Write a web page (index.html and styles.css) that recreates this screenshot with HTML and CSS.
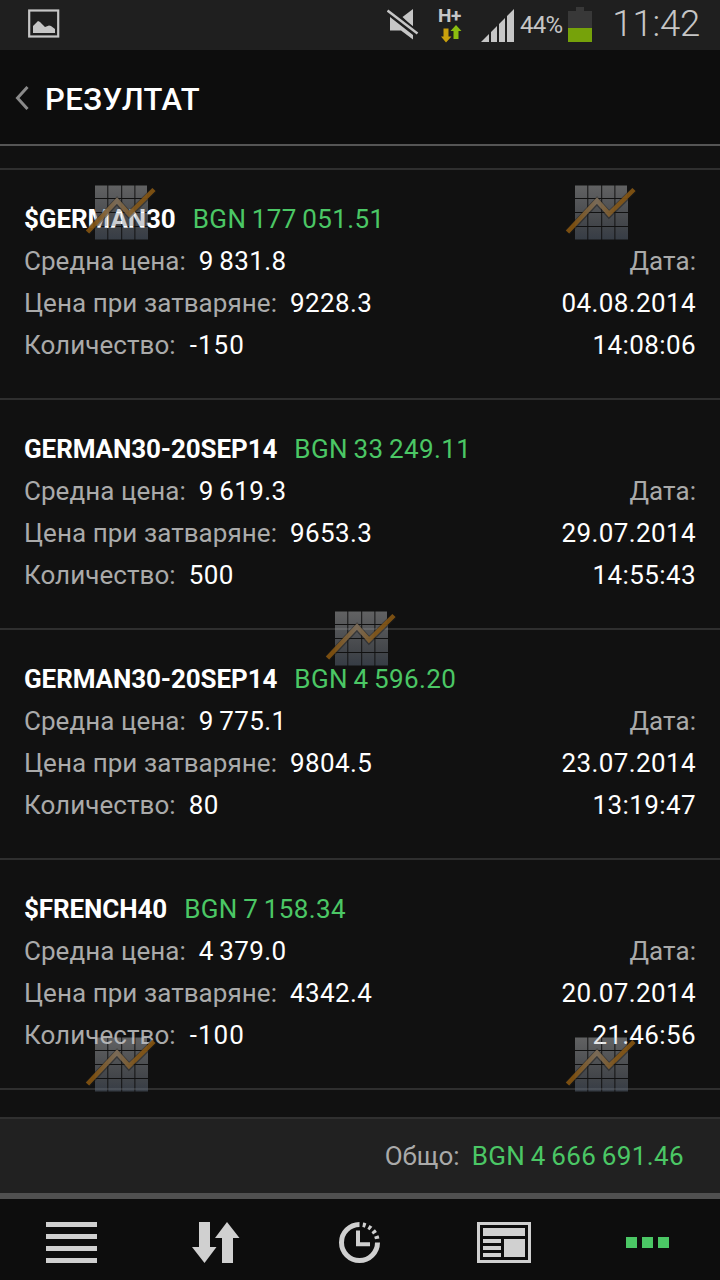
FILE: index.html
```
<!DOCTYPE html>
<html lang="bg">
<head>
    <meta charset="utf-8">
    <title>Резултат</title>
    <link rel="stylesheet" href="styles.css">
</head>
<body>
    <div class="statusbar">
        <svg class="icon-picture" width="32" height="29" viewBox="0 0 32 29">
            <rect x="1.2" y="1.5" width="29" height="26" fill="none" stroke="#c6c6c6" stroke-width="2.2"/>
            <path d="M5 24V17L10 12L12 13L17 18L21 16.500L23 17L27 20V24Z" fill="#c6c6c6"/>
        </svg>
        <svg class="icon-mute" width="32" height="32" viewBox="0 0 32 32">
            <path d="M26 1V19L15.500 9ZM3 9L26 27V31.500L14 22.500H3Z" fill="#c6c6c6"/>
            <path d="M0.500 2.500L30.500 25.500" stroke="#1f1f1f" stroke-width="6"/>
            <path d="M0.500 2.500L30.500 25.500" stroke="#c6c6c6" stroke-width="2.400"/>
        </svg>
        <div class="network">
            <span>H+</span>
            <svg width="22" height="18" viewBox="0 0 22 18">
                <path d="M2.500 3.500H7.500V11.500H10.500L5 17.500L0 11.500H2.500Z" fill="#c9a00c"/>
                <path d="M15 0L20.500 6H17.500V14H12.500V6H9.500Z" fill="#8bbd10"/>
            </svg>
        </div>
        <svg class="icon-signal" width="33" height="33" viewBox="0 0 33 33" fill="#c6c6c6">
            <path d="M0 33L8 25V33ZM10 23L16 17V33H10ZM18 15L24 9V33H18ZM26 7L33 0V33H26Z"/>
        </svg>
        <span class="percent">44%</span>
        <svg class="icon-battery" width="24" height="35" viewBox="0 0 24 35">
            <path d="M8 0H16V4H24V21H0V4H8Z" fill="#383838"/>
            <rect y="21" width="24" height="14" fill="#76a20a"/>
        </svg>
        <span class="time">11:42</span>
    </div>

    <header class="header">
        <svg width="14" height="24" viewBox="0 0 14 24"><path d="M12.500 1L2.500 12L12.500 23" fill="none" stroke="#8a8a8a" stroke-width="3"/></svg>
        <h1>РЕЗУЛТАТ</h1>
    </header>

    <main class="results">
        <div class="result">
            <div class="title"><b>$GERMAN30</b><span class="profit">BGN 177 051.51</span></div>
            <div class="line"><label>Средна цена:</label><span>9 831.8</span><label class="right">Дата:</label></div>
            <div class="line"><label>Цена при затваряне:</label><span>9228.3</span><span class="right">04.08.2014</span></div>
            <div class="line"><label>Количество:</label><span class="short">-150</span><span class="right">14:08:06</span></div>
        </div>
        <div class="result">
            <div class="title"><b>GERMAN30-20SEP14</b><span class="profit">BGN 33 249.11</span></div>
            <div class="line"><label>Средна цена:</label><span>9 619.3</span><label class="right">Дата:</label></div>
            <div class="line"><label>Цена при затваряне:</label><span>9653.3</span><span class="right">29.07.2014</span></div>
            <div class="line"><label>Количество:</label><span>500</span><span class="right">14:55:43</span></div>
        </div>
        <div class="result">
            <div class="title"><b>GERMAN30-20SEP14</b><span class="profit">BGN 4 596.20</span></div>
            <div class="line"><label>Средна цена:</label><span>9 775.1</span><label class="right">Дата:</label></div>
            <div class="line"><label>Цена при затваряне:</label><span>9804.5</span><span class="right">23.07.2014</span></div>
            <div class="line"><label>Количество:</label><span>80</span><span class="right">13:19:47</span></div>
        </div>
        <div class="result">
            <div class="title"><b>$FRENCH40</b><span class="profit">BGN 7 158.34</span></div>
            <div class="line"><label>Средна цена:</label><span>4 379.0</span><label class="right">Дата:</label></div>
            <div class="line"><label>Цена при затваряне:</label><span>4342.4</span><span class="right">20.07.2014</span></div>
            <div class="line"><label>Количество:</label><span class="short">-100</span><span class="right">21:46:56</span></div>
        </div>
    </main>

    <div class="total"><label>Общо:</label><span class="profit">BGN 4 666 691.46</span></div>

    <nav class="navbar">
        <a><svg width="52" height="41" viewBox="0 0 52 41"><path d="M0 0H51V5H0ZM0 12H51V17H0ZM0 24H51V29H0ZM0 36H51V41H0Z"/></svg></a>
        <a><svg width="48" height="41" viewBox="0 0 48 41"><path d="M7 0H18V25H24.500L12.500 41L0 25H7ZM35 0L47.500 16H41V41H30V16H23Z"/></svg></a>
        <a><svg width="42" height="41" viewBox="0 0 42 41">
            <g fill="none" stroke="#d0d0d0">
                <path d="M20.500 2.500A18 18 0 1 0 38.500 20.500" stroke-width="5"/>
                <path d="M23.750 2.800A18 18 0 0 1 38.200 17.100" stroke-width="4.500" stroke-dasharray="3 3.100"/>
                <path d="M19 8.500V22.300H31" stroke-width="4"/>
            </g>
        </svg></a>
        <a><svg width="54" height="41" viewBox="0 0 54 41"><path fill-rule="evenodd" d="M0 0H54V41H0ZM3 3V38H51V3ZM6 6H48V14H6ZM6 17H24V21H6ZM6 24H24V28H6ZM6 31H24V35H6ZM27 17H48V35H27Z"/></svg></a>
        <a class="active"><svg width="44" height="11" viewBox="0 0 44 11"><path d="M0 0H11V11H0ZM16 0H27V11H16ZM32 0H43V11H32Z"/></svg></a>
    </nav>

    <!-- watermarks over the list -->
    <svg class="watermark" width="720" height="1280" viewBox="0 0 720 1280">
        <defs>
            <linearGradient id="tiles" x1="0" y1="0" x2="0" y2="54" gradientUnits="userSpaceOnUse">
                <stop offset="0" stop-color="#c8c9cb"/>
                <stop offset="0.7" stop-color="#858b94"/>
                <stop offset="1" stop-color="#667488"/>
            </linearGradient>
            <linearGradient id="trend" x1="0" y1="0" x2="70" y2="0" gradientUnits="userSpaceOnUse">
                <stop offset="0.1" stop-color="#85540f"/>
                <stop offset="0.440" stop-color="#80705c"/>
                <stop offset="0.7" stop-color="#85591b"/>
                <stop offset="1" stop-color="#85540f"/>
            </linearGradient>
            <g id="chart">
                <path d="M9 0H21.300V12.500H9ZM22.300 0H35.200V12.500H22.300ZM36.200 0H48.400V12.500H36.200ZM49.400 0H61V12.500H49.400ZM9 13.500H21.300V26.500H9ZM22.300 13.500H35.200V26.500H22.300ZM36.200 13.500H48.400V26.500H36.200ZM49.400 13.500H62V26.500H49.400ZM9 27.500H21.300V40.500H9ZM22.300 27.500H35.200V40.500H22.300ZM36.200 27.500H48.400V40.500H36.200ZM49.400 27.500H62V40.500H49.400ZM9 41.500H21.300V54H9ZM22.300 41.500H35.200V54H22.300ZM36.200 41.500H48.400V54H36.200ZM49.400 41.500H62V54H49.400Z" fill="url(#tiles)" opacity="0.440"/>
                <path d="M1.500 47L31 15.500L43 29L68 4.500" fill="none" stroke="#1b1b1b" stroke-width="6.500" opacity="0.5"/>
                <path d="M1.500 46.500L31 15L43 28.500L68 4" fill="none" stroke="url(#trend)" stroke-width="4.500" opacity="0.9"/>
            </g>
        </defs>
        <use href="#chart" x="86" y="185.500"/>
        <use href="#chart" x="566" y="185.500"/>
        <use href="#chart" x="326" y="611.500"/>
        <use href="#chart" x="86" y="1037.500"/>
        <use href="#chart" x="566" y="1037.500"/>
    </svg>
</body>
</html>
```
FILE: styles.css
```
* {
    box-sizing: border-box;
}

body {
    width: 720px;
    height: 1280px;
    margin: 0;
    overflow: hidden;
    background-color: #111;
    color: #fff;
    font-family: Roboto, sans-serif;
    font-size: 26px;
}

.statusbar {
    display: flex;
    align-items: flex-start;
    height: 50px;
    padding: 0 20px 0 28px;
    background-color: #1f1f1f;
    color: #c6c6c6;
}

.icon-picture {
    margin-top: 9px;
}

.icon-mute {
    margin: 8px 0 0 327px;
}

.network {
    width: 26px;
    margin: 8px 0 0 19px;
    font-size: 19px;
    font-weight: 700;
    line-height: 16px;
    letter-spacing: -0.3px;
}

.network svg {
    display: block;
    margin: 1px 0 0 3px;
}

.icon-signal {
    margin: 9px 0 0 17px;
}

.percent {
    width: 48px;
    margin-left: 6px;
    font-size: 24px;
    line-height: 50px;
    letter-spacing: -0.7px;
}

.icon-battery {
    margin-top: 7px;
}

.time {
    margin-left: auto;
    font-size: 36.500px;
    font-weight: 350;
    line-height: 47px;
    letter-spacing: -0.2px;
}

.header {
    display: flex;
    align-items: center;
    height: 96px;
    padding-left: 15px;
    border-bottom: 2px solid #555;
    background-color: #0d0d0d;
}

.header svg {
    margin-top: 2px;
}

.header h1 {
    margin: 4px 0 0 16px;
    font-size: 31px;
    font-weight: 500;
    letter-spacing: 0.5px;
}

.results {
    height: 971px;
    padding-top: 22px;
}

.result {
    height: 230px;
    padding: 28px 24px 0;
    border-top: 2px solid #2f2f2f;
}

.result:last-child {
    height: 232px;
    border-bottom: 2px solid #2f2f2f;
}

.title,
.line {
    display: flex;
    height: 42px;
    line-height: 42px;
    letter-spacing: 0.4px;
    word-spacing: -1.4px;
    white-space: pre;
}

.title b {
    margin-right: 17px;
    font-weight: 700;
    letter-spacing: -0.1px;
}

.line label {
    margin-right: 13px;
}

.line .short {
    margin-left: 1px;
    letter-spacing: 1.1px;
}

label {
    color: #aaa;
    letter-spacing: 0.05px;
    word-spacing: 0;
}

.line .right {
    margin-left: auto;
    margin-right: 0;
}

.profit {
    color: #4bc765;
}

.total {
    display: flex;
    justify-content: flex-end;
    height: 82px;
    padding-right: 36px;
    border-top: 2px solid #303030;
    border-bottom: 6px solid #505050;
    background-color: #212121;
    line-height: 74px;
    letter-spacing: 0.4px;
    word-spacing: -1.4px;
}

.total label {
    margin-right: 12px;
}

.navbar {
    display: flex;
    height: 81px;
    background-color: #0d0d0d;
}

.navbar a {
    display: flex;
    flex: 1;
    align-items: center;
    justify-content: center;
    padding-top: 6px;
}

.navbar svg {
    fill: #d0d0d0;
}

.navbar .active svg {
    fill: #4bc765;
}

.watermark {
    position: absolute;
    top: 0;
    left: 0;
    pointer-events: none;
}
```
